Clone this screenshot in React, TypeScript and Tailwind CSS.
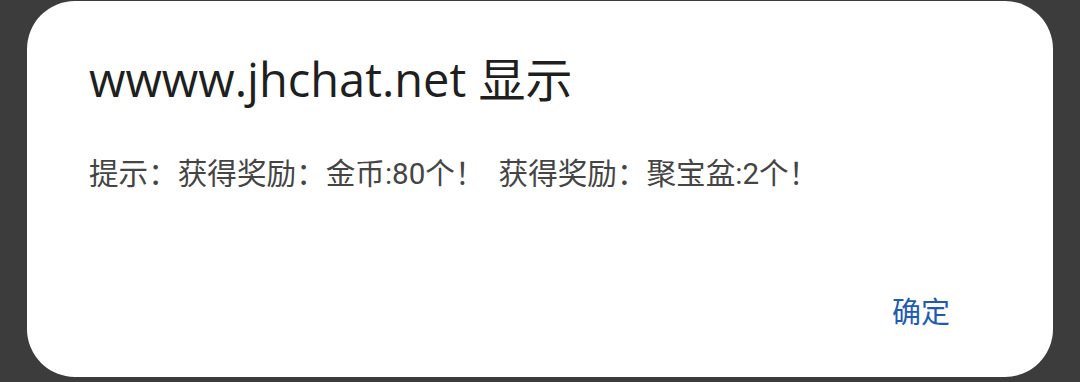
import React from "react";

export default function App() {
  return (
    <div className="w-[1080px] h-[382px] bg-[#3c3c3c] pt-px pl-[27px] overflow-hidden">
      <div className="w-[1026px] h-[376px] rounded-[48px] bg-white flex flex-col pl-[62px] pr-[103px] pt-[50px]" style={{ fontFamily: '"Roboto", "Noto Sans CJK SC", sans-serif' }}>
        <div className="text-[47px] leading-[56px] text-[#1f1f1f]" style={{ fontFamily: '"Open Sans", "Noto Sans CJK SC", sans-serif' }}>wwww.jhchat.net 显示</div>
        <div className="mt-[47px] text-[29.6px] leading-[40px] text-[#454545]">提示：获得奖励：金币:80个！<span className="ml-[14px]">获得奖励：聚宝盆:2个！</span></div>
        <div className="mt-auto mb-[44px] flex justify-end">
          <button className="text-[29px] leading-[40px] text-[#1f5bb5]">确定</button>
        </div>
      </div>
    </div>
  );
}
